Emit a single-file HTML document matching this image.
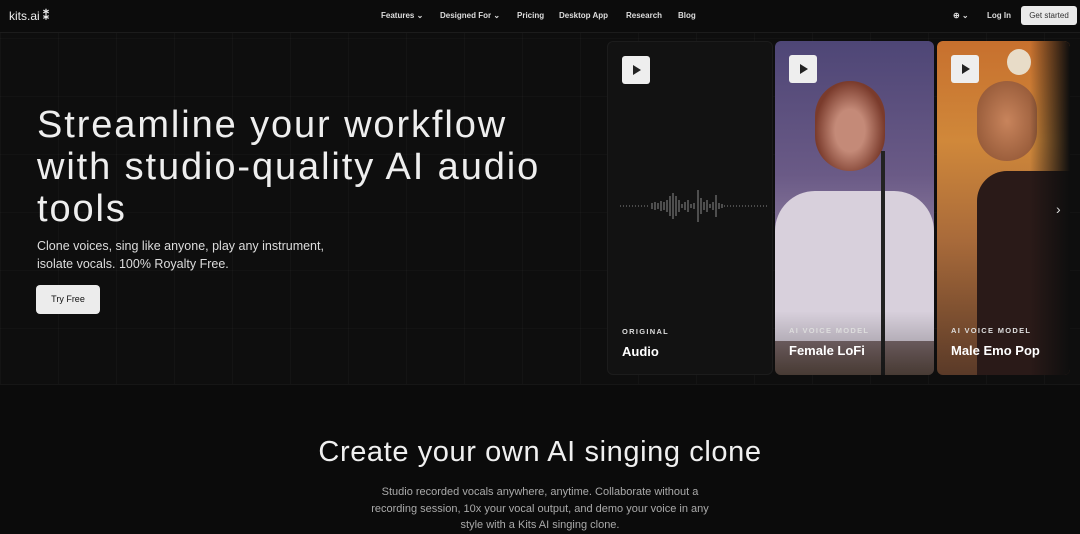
<!DOCTYPE html>
<html><head><meta charset="utf-8"><style>
*{margin:0;padding:0;box-sizing:border-box}
body{width:1080px;height:531px;overflow:hidden;background:#0b0b0b;font-family:"Liberation Sans",sans-serif;color:#eee;position:relative}
.nav{position:absolute;top:0;left:0;right:0;height:33px;background:#0c0c0c;border-bottom:1px solid #1c1c1c}
.nav span{position:absolute;top:11px;font-size:8px;font-weight:bold;color:#ddd}
.hero{position:absolute;top:33px;left:0;width:1080px;height:352px;background:#0e0e0e;
background-image:linear-gradient(90deg,rgba(255,255,255,.025) 1px,transparent 1px),linear-gradient(0deg,rgba(255,255,255,.02) 1px,transparent 1px);background-size:58px 58px;background-position:0 0,0 6px;border-bottom:1px solid #161616}
h1{position:absolute;left:37px;top:104px;font-size:38px;line-height:42px;font-weight:normal;letter-spacing:1.9px;color:#eee;white-space:nowrap}
.sub{position:absolute;left:37px;top:237px;font-size:12.5px;line-height:18px;color:#ddd}
.btn{position:absolute;left:36px;top:285px;width:64px;height:29px;background:#ececec;border-radius:4px;color:#111;font-size:9px;text-align:center;line-height:29px}
.card{position:absolute;top:41px;height:334px;border-radius:6px;overflow:hidden}
.play{position:absolute;top:14px;left:14px;width:28px;height:28px;background:#eee;border-radius:3px}
.play:after{content:"";position:absolute;left:11px;top:9px;border-left:8px solid #222;border-top:5px solid transparent;border-bottom:5px solid transparent}
.lab{position:absolute;left:14px;top:285px;font-size:7.5px;font-weight:bold;letter-spacing:1.3px;color:#ddd}
.ttl{position:absolute;left:14px;top:302px;font-size:13px;font-weight:bold;color:#fff;white-space:nowrap}
</style></head><body>
<div class="nav">
<span style="left:9px;top:9px;font-size:12px;font-weight:normal;color:#eee">kits.ai <b>⁑</b></span>
<span style="left:381px">Features ⌄</span>
<span style="left:440px">Designed For ⌄</span>
<span style="left:517px">Pricing</span>
<span style="left:559px">Desktop App</span>
<span style="left:626px">Research</span>
<span style="left:678px">Blog</span>
<span style="left:953px">⊕ ⌄</span>
<span style="left:987px">Log In</span>
<div style="position:absolute;left:1021px;top:6px;width:56px;height:19px;background:#eaeaea;border-radius:3px;color:#333;font-size:8px;text-align:center;line-height:19px">Get started</div>
</div>
<div class="hero"></div>
<h1>Streamline your workflow<br>with studio-quality AI audio<br>tools</h1>
<div class="sub">Clone voices, sing like anyone, play any instrument,<br>isolate vocals. 100% Royalty Free.</div>
<div class="btn">Try Free</div>

<div class="card" style="left:607px;width:166px;background:#121212;border:1px solid #1c1c1c">
<div class="play"></div>
<svg style="position:absolute;left:12px;top:148px" width="148" height="32"><g stroke="#aaa" stroke-width="0.8">
<line x1="0" y1="16" x2="30" y2="16" stroke-dasharray="1 2"/>
<line x1="32" y1="13" x2="32" y2="19"/><line x1="35" y1="12" x2="35" y2="20"/><line x1="38" y1="13" x2="38" y2="19"/><line x1="41" y1="11" x2="41" y2="21"/><line x1="44" y1="12" x2="44" y2="20"/><line x1="47" y1="10" x2="47" y2="22"/><line x1="50" y1="6" x2="50" y2="26"/><line x1="53" y1="3" x2="53" y2="29"/><line x1="56" y1="6" x2="56" y2="26"/><line x1="59" y1="10" x2="59" y2="22"/><line x1="62" y1="14" x2="62" y2="18"/><line x1="65" y1="12" x2="65" y2="20"/><line x1="68" y1="10" x2="68" y2="22"/><line x1="71" y1="14" x2="71" y2="18"/><line x1="74" y1="13" x2="74" y2="19"/><line x1="78" y1="0" x2="78" y2="32"/><line x1="81" y1="8" x2="81" y2="24"/><line x1="84" y1="12" x2="84" y2="20"/><line x1="87" y1="10" x2="87" y2="22"/><line x1="90" y1="14" x2="90" y2="18"/><line x1="93" y1="12" x2="93" y2="20"/><line x1="96" y1="5" x2="96" y2="27"/><line x1="99" y1="13" x2="99" y2="19"/><line x1="102" y1="14" x2="102" y2="18"/>
<line x1="104" y1="16" x2="148" y2="16" stroke-dasharray="1 2"/></g></svg>
<div class="lab">ORIGINAL</div><div class="ttl">Audio</div>
</div>
<div class="card" style="left:775px;width:159px;background:linear-gradient(180deg,#4e4676 0%,#6a5a86 40%,#9b8aa8 70%,#6e5a50 100%)">
<div style="position:absolute;left:40px;top:40px;width:70px;height:90px;border-radius:40px;background:radial-gradient(ellipse at 50% 55%,#c48a78 30%,#7a3b2c 70%)"></div>
<div style="position:absolute;left:0;top:150px;width:159px;height:150px;border-radius:40px 40px 0 0;background:#d8d0dc"></div>
<div style="position:absolute;left:106px;top:110px;width:4px;height:230px;background:#222"></div>
<div style="position:absolute;left:0;top:270px;width:159px;height:64px;background:linear-gradient(180deg,transparent,rgba(0,0,0,.35))"></div>
<div class="play"></div>
<div class="lab">AI VOICE MODEL</div><div class="ttl">Female LoFi</div>
</div>
<div class="card" style="left:937px;width:133px;background:linear-gradient(180deg,#c7702e 0%,#d0883a 30%,#a86a3a 60%,#5a3a28 100%)">
<div style="position:absolute;left:70px;top:8px;width:24px;height:26px;border-radius:50%;background:#e8dcc8"></div>
<div style="position:absolute;left:40px;top:40px;width:60px;height:80px;border-radius:30px;background:radial-gradient(#c8845c,#8a5030)"></div>
<div style="position:absolute;left:40px;top:130px;width:100px;height:210px;background:#2a1a18;border-radius:30px 0 0 0"></div>
<div style="position:absolute;right:0;top:0;width:40px;height:334px;background:linear-gradient(90deg,transparent,#0e0e0e)"></div>
<div class="play"></div>
<div class="lab">AI VOICE MODEL</div><div class="ttl">Male Emo Pop</div>
</div>
<div style="position:absolute;left:1056px;top:201px;font-size:14px;color:#ddd">›</div>

<div style="position:absolute;left:0;top:436px;width:1080px;text-align:center;font-size:29px;letter-spacing:0.6px;color:#f0f0f0">Create your own AI singing clone</div>
<div style="position:absolute;left:0;top:484px;width:1080px;text-align:center;font-size:11px;line-height:16.5px;color:#aaa">Studio recorded vocals anywhere, anytime. Collaborate without a<br>recording session, 10x your vocal output, and demo your voice in any<br>style with a Kits AI singing clone.</div>
</body></html>
